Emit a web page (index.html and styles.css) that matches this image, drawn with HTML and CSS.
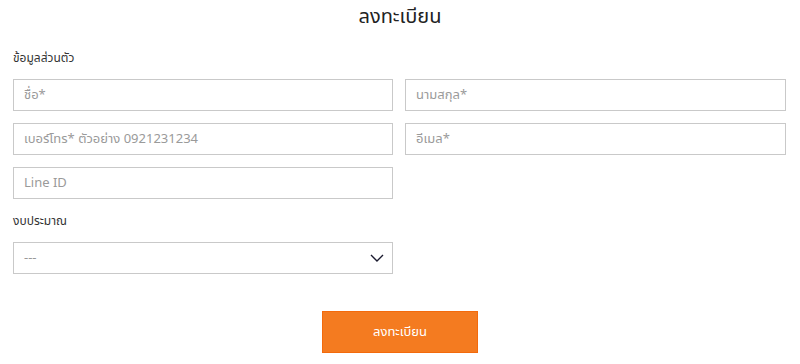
FILE: index.html
```html
<!DOCTYPE html>
<html>
<head>
    <title>ลงทะเบียน</title>
    <link rel="stylesheet" href="styles.css">
</head>
<body>
<h1>ลงทะเบียน</h1>
<form class="register-form">
    <div class="section-label">ข้อมูลส่วนตัว</div>
    <div class="grid">
        <input type="text" placeholder="ชื่อ*">
        <input type="text" placeholder="นามสกุล*">
        <input type="text" placeholder="เบอร์โทร* ตัวอย่าง 0921231234">
        <input type="text" placeholder="อีเมล*">
        <input type="text" placeholder="Line ID">
    </div>

    <div class="section-label budget">งบประมาณ</div>
    <div class="grid">
        <div class="select-wrap">
            <select>
                <option>---</option>
            </select>
            <svg class="chevron" width="14" height="8" viewBox="0 0 14 8">
                <path d="M1 1 L7 7 L13 1" fill="none" stroke="#1a1a2e" stroke-width="1.4"/>
            </svg>
        </div>
    </div>

    <div class="actions">
        <button type="submit">ลงทะเบียน</button>
    </div>
</form>
</body>
</html>
```

FILE: styles.css
```css
body {
    font-family: "Noto Sans Thai", "Noto Sans", "DejaVu Sans", sans-serif;
    margin: 0;
    padding: 0;
    background-color: #fff;
    color: #222;
}

h1 {
    margin: 0;
    padding-top: 2px;
    height: 36px;
    line-height: 30px;
    font-size: 20px;
    font-weight: normal;
    text-align: center;
    color: #222;
}

.register-form {
    padding: 0 14px 0 13px;
}

.section-label {
    font-size: 12px;
    color: #333;
    height: 41px;
    line-height: 40px;
}

.section-label.budget {
    margin-top: 2px;
    height: 41px;
}

.grid {
    display: grid;
    grid-template-columns: 380px 381px;
    column-gap: 12px;
    row-gap: 12px;
}

input[type="text"],
select {
    box-sizing: border-box;
    width: 100%;
    height: 32px;
    padding: 0 10px;
    border: 1px solid #c9c9c9;
    border-radius: 0;
    font-family: inherit;
    font-size: 13px;
    color: #555;
    background: #fff;
    outline: none;
}

input::placeholder {
    color: #9a9a9a;
}

.select-wrap {
    position: relative;
}

select {
    appearance: none;
    -webkit-appearance: none;
    color: #999;
}

.chevron {
    position: absolute;
    right: 9px;
    top: 12px;
    pointer-events: none;
}

.actions {
    display: flex;
    justify-content: center;
    margin-top: 37px;
    padding-left: 1px;
}

button[type="submit"] {
    width: 156px;
    height: 42px;
    background-color: #f47b20;
    border: 1px solid #f36a0c;
    color: #fff;
    font-family: inherit;
    font-size: 13px;
    cursor: pointer;
}
```
